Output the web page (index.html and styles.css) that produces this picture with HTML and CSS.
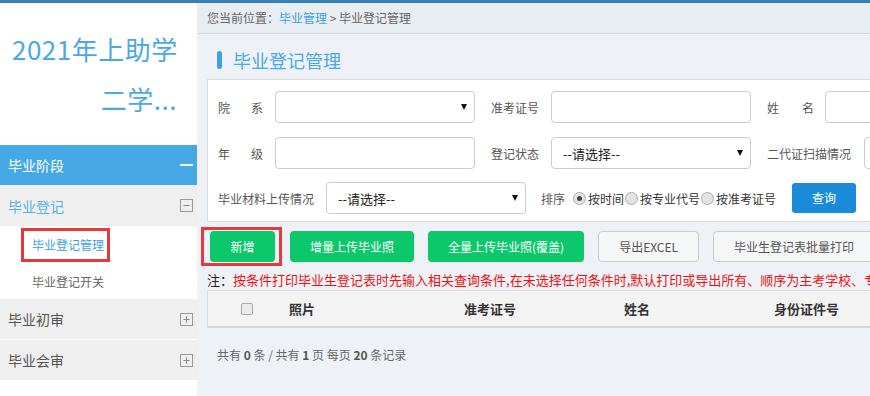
FILE: index.html
```html
<!DOCTYPE html>
<html lang="zh">
<head>
<meta charset="utf-8">
<title>毕业登记管理</title>
<link rel="stylesheet" href="styles.css">
</head>
<body>
<div class="topbar"></div>
<div class="layout">
  <aside class="sidebar">
    <div class="brand">
      <div>2021年上助学</div>
      <div class="brand-2">二学...</div>
    </div>
    <div class="menu-head"><span>毕业阶段</span><span class="dash"></span></div>
    <div class="menu-group open"><span>毕业登记</span>
      <svg class="toggle" width="13" height="13" viewBox="0 0 13 13"><rect x="0.5" y="0.5" width="12" height="12" fill="none" stroke="#9a9a9a"/><path d="M3.5 6.5H9.5" stroke="#8a8a8a"/></svg>
    </div>
    <div class="submenu">
      <div class="sub-item sub-current"><span class="current">毕业登记管理</span></div>
      <div class="sub-item">毕业登记开关</div>
    </div>
    <div class="menu-group"><span>毕业初审</span>
      <svg class="toggle" width="13" height="13" viewBox="0 0 13 13"><rect x="0.5" y="0.5" width="12" height="12" fill="none" stroke="#9a9a9a"/><path d="M3.5 6.5H9.5M6.5 3.5V9.5" stroke="#8a8a8a"/></svg>
    </div>
    <div class="menu-group"><span>毕业会审</span>
      <svg class="toggle" width="13" height="13" viewBox="0 0 13 13"><rect x="0.5" y="0.5" width="12" height="12" fill="none" stroke="#9a9a9a"/><path d="M3.5 6.5H9.5M6.5 3.5V9.5" stroke="#8a8a8a"/></svg>
    </div>
  </aside>

  <main class="main">
    <div class="crumb">您当前位置：<a>毕业管理</a> &gt; 毕业登记管理</div>
    <h2 class="page-title">毕业登记管理</h2>

    <div class="content">
      <div class="panel">
        <div class="row">
          <span class="lab lab-a"><span class="just">院 系</span></span>
          <div class="field select"><span class="val"></span><span class="caret"></span></div>
          <span class="lab lab-b">准考证号</span>
          <div class="field"></div>
          <span class="lab lab-c"><span class="just just-w">姓 名</span></span>
          <div class="field"></div>
        </div>
        <div class="row">
          <span class="lab lab-a"><span class="just">年 级</span></span>
          <div class="field"></div>
          <span class="lab lab-b">登记状态</span>
          <div class="field select"><span class="val">--请选择--</span><span class="caret"></span></div>
          <span class="lab lab-d">二代证扫描情况</span>
          <div class="field"></div>
        </div>
        <div class="row row-3">
          <span class="lab lab-e">毕业材料上传情况</span>
          <div class="field select field-gap"><span class="val">--请选择--</span><span class="caret"></span></div>
          <span class="lab lab-sort">排序</span>
          <span class="radio"><span class="dot on"></span>按时间</span>
          <span class="radio"><span class="dot"></span>按专业代号</span>
          <span class="radio"><span class="dot"></span>按准考证号</span>
          <span class="btn-query">查询</span>
        </div>
      </div>

      <div class="toolbar">
        <span class="mark"><span class="btn btn-green btn-new">新增</span></span>
        <span class="btn btn-green">增量上传毕业照</span>
        <span class="btn btn-green">全量上传毕业照(覆盖)</span>
        <span class="btn btn-plain">导出EXCEL</span>
        <span class="btn btn-plain">毕业生登记表批量打印</span>
      </div>

      <p class="note">注：<span class="warn">按条件打印毕业生登记表时先输入相关查询条件,在未选择任何条件时,默认打印或导出所有、顺序为主考学校、专业代号、准考证号</span></p>

      <div class="table">
        <div class="th th-check"><span class="checkbox"></span></div>
        <div class="th">照片</div>
        <div class="th">准考证号</div>
        <div class="th">姓名</div>
        <div class="th">身份证件号</div>
      </div>

      <p class="pager">共有 <b>0</b> 条 / 共有 <b>1</b> 页 每页 <b>20</b> 条记录</p>
    </div>
  </main>
</div>
</body>
</html>
```

FILE: styles.css
```css
* {
  box-sizing: border-box;
  margin: 0;
  padding: 0;
}

html, body {
  width: 870px;
  height: 396px;
  overflow: hidden;
}

body {
  font-family: "Noto Sans CJK SC", "Microsoft YaHei", "Liberation Sans", sans-serif;
  font-size: 12px;
  color: #555;
  background: #fff;
}

.topbar {
  height: 3px;
  background: #3a7fb6;
}

.layout {
  display: flex;
  height: 393px;
}

/* Sidebar */
.sidebar {
  width: 197px;
  flex: none;
  background: #fff;
}

.brand {
  padding: 21px 20px 21px 12px;
  font-size: 26px;
  line-height: 50px;
  letter-spacing: 0.5px;
  color: #4aa8e8;
  white-space: nowrap;
}

.brand-2 {
  text-align: right;
}

.menu-head,
.menu-group {
  display: flex;
  align-items: center;
  justify-content: space-between;
  padding: 0 4px 0 8px;
  font-size: 14px;
}

.menu-head {
  height: 40px;
  background: #45a9e6;
  color: #fff;
}

.dash {
  width: 13px;
  height: 2px;
  background: #fff;
}

.menu-group {
  height: 41px;
  background: #efefef;
  color: #555;
  border-bottom: 1px solid #fff;
}

.menu-group.open {
  color: #5ab0ea;
  border-bottom: 0;
}

.toggle {
  display: block;
}

.submenu {
  padding-top: 1px;
}

.sub-item {
  height: 36px;
  display: flex;
  align-items: center;
  padding-left: 32px;
  font-size: 12px;
  color: #666;
}

.sub-item.sub-current {
  padding-left: 21px;
}

.current {
  border: 3px solid #e8383b;
  padding: 0 3px 0 8px;
  line-height: 28px;
  color: #3d9fe4;
}

/* Main */
.main {
  flex: 1;
  min-width: 0;
  overflow: hidden;
  background: #eef2f6;
}

.crumb {
  height: 31px;
  background: #e8edf1;
  border-bottom: 1px solid #d6dadd;
  padding-left: 10px;
  line-height: 30px;
  white-space: nowrap;
  color: #666;
}

.crumb a {
  color: #3d9fe4;
}

.page-title {
  height: 45px;
  padding: 6px 0 0 20px;
  display: flex;
  align-items: center;
  font-size: 18px;
  font-weight: normal;
  color: #4aa8e8;
}

.page-title::before {
  content: "";
  width: 5px;
  height: 18px;
  border-radius: 3px;
  background: #3aa0e8;
  margin-right: 11px;
}

.content {
  width: 1200px;
  padding-left: 10px;
}

.panel {
  background: #fff;
  border: 1px solid #dcdcdc;
  padding: 11px 0 7px 10px;
}

.row {
  display: flex;
  align-items: center;
  height: 32px;
  white-space: nowrap;
}

.row + .row {
  margin-top: 14px;
}

.row.row-3 {
  margin-top: 13px;
}

.lab {
  flex: none;
  color: #555;
  font-size: 12px;
}

.lab-a { width: 57px; }
.lab-b { width: 60px; }
.lab-c { width: 58px; }
.lab-d { width: 97px; }
.lab-e { width: 108px; }
.lab-sort { margin-right: 8px; }

.just {
  display: inline-block;
  width: 45px;
  text-align: justify;
  text-align-last: justify;
}

.just.just-w {
  width: 47px;
}

.field {
  flex: none;
  width: 200px;
  height: 32px;
  margin-right: 16px;
  border: 1px solid #ccc;
  border-radius: 4px;
  background: #fff;
  display: flex;
  align-items: center;
  padding: 0 7px 0 11px;
  font-size: 13px;
  color: #222;
}

.field.field-gap {
  margin-right: 15px;
}

.val {
  flex: 1;
}

.caret {
  width: 0;
  height: 0;
  border-left: 3px solid transparent;
  border-right: 3px solid transparent;
  border-top: 6px solid #111;
}

.radio {
  display: inline-flex;
  align-items: center;
  margin-right: 1px;
  font-size: 12px;
  color: #333;
}

.dot {
  width: 13px;
  height: 13px;
  border-radius: 50%;
  border: 1px solid #aaa;
  background: #e4e4e4;
  display: inline-flex;
  align-items: center;
  justify-content: center;
  margin-right: 2px;
}

.dot.on::after {
  content: "";
  width: 5px;
  height: 5px;
  border-radius: 50%;
  background: #444;
}

.btn-query {
  margin-left: 15px;
  width: 64px;
  height: 30px;
  line-height: 30px;
  text-align: center;
  border-radius: 3px;
  background: #1b8ad8;
  color: #fff;
  font-size: 12px;
}

/* Toolbar */
.toolbar {
  display: flex;
  align-items: center;
  gap: 14px;
  margin-top: 5px;
  white-space: nowrap;
}

.mark {
  margin-left: -6px;
  margin-right: -6px;
  border: 3px solid #e8383b;
  padding: 1px 4px 1px 6px;
  display: inline-flex;
}

.btn {
  display: inline-block;
  height: 31px;
  line-height: 31px;
  padding: 0 20px;
  border-radius: 4px;
  font-size: 12px;
}

.btn-green {
  background: #0dc76b;
  color: #fff;
}

.btn-new {
  width: 65px;
  padding: 0;
  text-align: center;
}

.btn-plain {
  background: #f5f6f7;
  border: 1px solid #ccc;
  line-height: 29px;
  color: #555;
}

.note {
  margin-top: 4px;
  font-size: 13px;
  line-height: 20px;
  color: #222;
  white-space: nowrap;
}

.warn {
  color: #f01010;
}

/* Table */
.table {
  display: grid;
  grid-template-columns: 81px 175px 160px 150px 1fr;
  align-items: center;
  height: 38px;
  background: #f3f3f3;
  border: 1px solid #dcdcdc;
  border-bottom: 2px solid #d6d6d6;
}

.th {
  font-size: 13px;
  font-weight: bold;
  color: #333;
}

.th-check {
  padding-left: 33px;
  display: flex;
  align-items: center;
}

.checkbox {
  width: 12px;
  height: 12px;
  border: 1px solid #a8a8a8;
  border-radius: 2px;
  background: #ececec;
}

.pager {
  margin-top: 17px;
  padding-left: 10px;
  line-height: 20px;
  font-size: 12px;
  color: #666;
}

.pager b {
  color: #555;
}
```
